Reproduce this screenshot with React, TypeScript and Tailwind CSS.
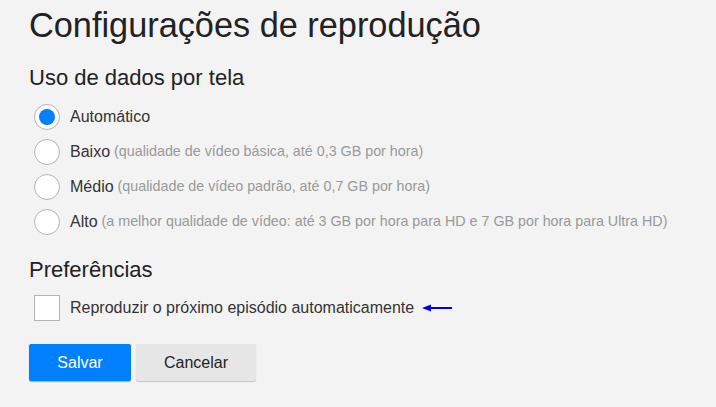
import React from "react";

const options = [
  { label: "Automático", desc: "", checked: true },
  { label: "Baixo", desc: "(qualidade de vídeo básica, até 0,3 GB por hora)", checked: false },
  { label: "Médio", desc: "(qualidade de vídeo padrão, até 0,7 GB por hora)", checked: false },
  { label: "Alto", desc: "(a melhor qualidade de vídeo: até 3 GB por hora para HD e 7 GB por hora para Ultra HD)", checked: false },
];

export default function App() {
  return (
    <div
      className="w-[716px] h-[407px] bg-[#f3f3f3] pl-[29px] pt-[3px] text-[#333]"
      style={{ fontFamily: '"Liberation Sans", Arial, sans-serif' }}
    >
      <h1 className="text-[34.3px] leading-[44px] font-normal text-[#222]">Configurações de reprodução</h1>
      <h2 className="mt-[19px] text-[22px] leading-[24px] text-[#222]">Uso de dados por tela</h2>
      <div className="mt-[14px] flex flex-col gap-[9px]">
        {options.map((o) => (
          <div key={o.label} className="flex items-center h-[26px]">
            <div className="w-[26px] h-[26px] rounded-full bg-white border border-[#b3b3b3] flex items-center justify-center ml-[5px]">
              {o.checked && <div className="w-[16px] h-[16px] rounded-full bg-[#0080ff]" />}
            </div>
            <span className="ml-[10px] text-[16px] text-[#333]">{o.label}</span>
            {o.desc && <span className="ml-[4px] text-[14.3px] text-[#999]">{o.desc}</span>}
          </div>
        ))}
      </div>
      <h2 className="mt-[23px] text-[22px] leading-[24px] text-[#222]">Preferências</h2>
      <div className="mt-[13px] flex items-center h-[26px]">
        <div className="ml-[5px] w-[26px] h-[26px] bg-white border border-[#b3b3b3]" />
        <span className="ml-[10px] text-[16px] text-[#333]">Reproduzir o próximo episódio automaticamente</span>
        <svg width="30" height="8" viewBox="0 0 30 8" className="ml-[8px]">
          <line x1="6" y1="4" x2="30" y2="4" stroke="#0000ee" strokeWidth="2" />
          <polygon points="0,4 9,0.5 9,7.5" fill="#0000ee" />
        </svg>
      </div>
      <div className="mt-[23px] flex gap-[5px]">
        <button className="w-[102px] h-[37px] rounded-[2px] bg-[#0080ff] text-white text-[16px] shadow-[0_1px_1px_rgba(0,0,0,0.3)]">
          Salvar
        </button>
        <button className="w-[120px] h-[37px] rounded-[2px] bg-[#e6e6e6] text-[#222] text-[16px] shadow-[0_1px_1px_rgba(0,0,0,0.2)]">
          Cancelar
        </button>
      </div>
    </div>
  );
}
